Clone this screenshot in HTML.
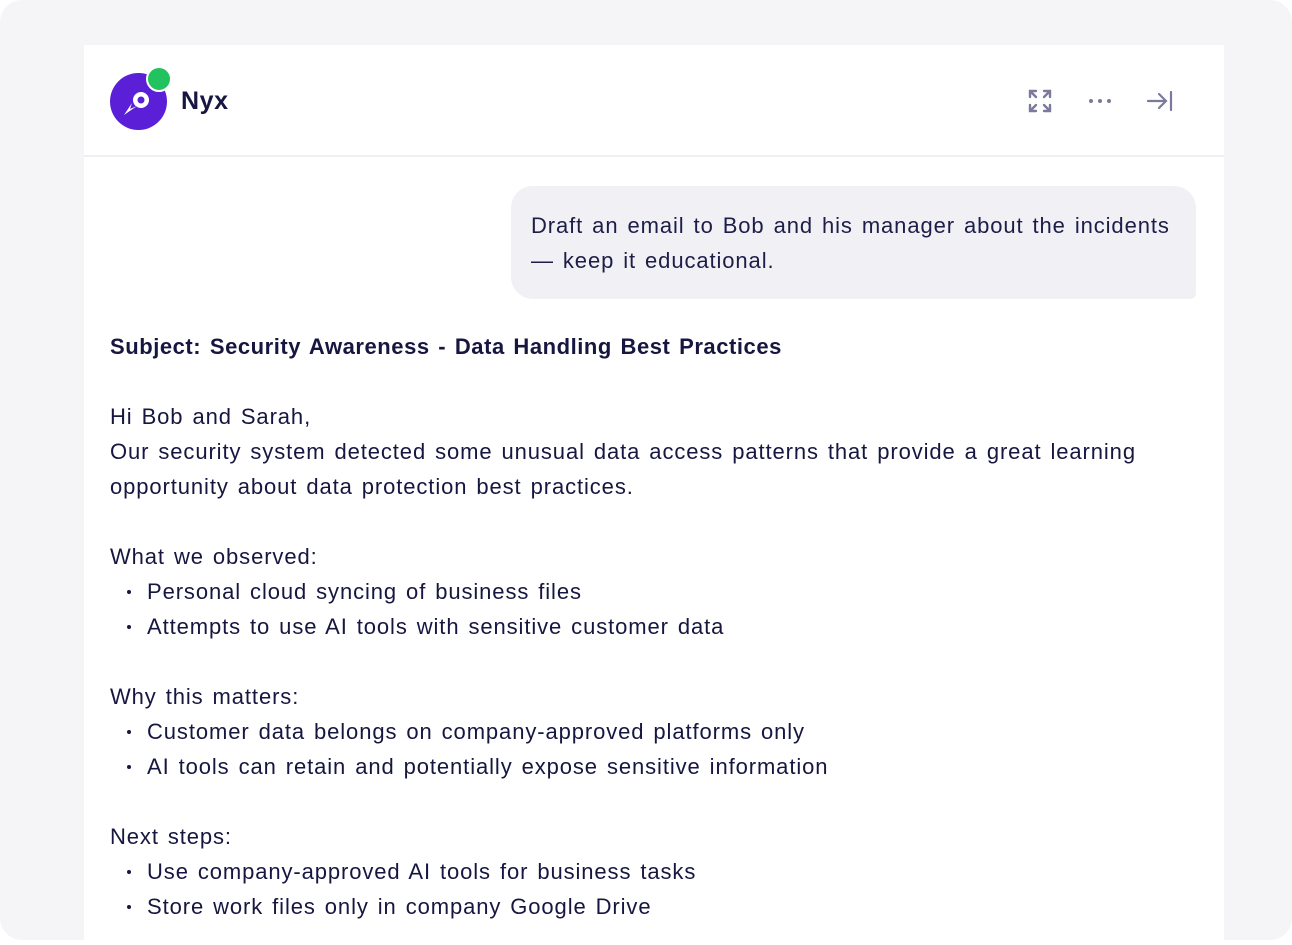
<!DOCTYPE html>
<html><head><meta charset="utf-8"><style>
*{margin:0;padding:0;box-sizing:border-box}
body{width:1292px;height:920px;background:#fff;overflow:hidden;font-family:"Liberation Sans",sans-serif;color:#161640}
.bg{position:absolute;left:0;top:0;width:1292px;height:940px;background:#f5f5f7;border-radius:22px}
.card{position:absolute;left:84px;top:45px;width:1140px;height:900px;background:#fff}
.hdr{height:112px;border-bottom:2px solid #efeff3;position:relative}
.logo{position:absolute;left:26px;top:28px;width:57px;height:57px;border-radius:50%;background:#5a1fd6}
.dot{position:absolute;left:62px;top:21px;width:26px;height:26px;border-radius:50%;background:#22c35e;border:2px solid #fff}
.name{position:absolute;left:97px;top:42px;font-size:25px;letter-spacing:0.6px;font-weight:bold;color:#161640}
.icons svg{position:absolute}
.bubble{position:absolute;left:427px;top:141px;width:685px;height:113px;background:#f0f0f5;border-radius:22px 22px 6px 22px;padding:22px 20px;font-size:22px;letter-spacing:0.9px;word-spacing:2px;line-height:35px;color:#1d1d48}
.body{position:absolute;left:26px;top:284px;font-size:22px;letter-spacing:0.9px;word-spacing:2px;line-height:35px;color:#161640}
.body b{font-weight:bold;letter-spacing:0.55px}
.li{padding-left:37px;position:relative}
.li:before{content:"";position:absolute;left:17px;top:16px;width:4px;height:4px;border-radius:50%;background:#161640}
</style></head><body>
<div class="bg"></div>
<div class="card">
<div class="hdr">
<div class="logo"><svg width="57" height="57" viewBox="0 0 57 57"><path d="M14 42 L22 30 L20 36 L27 33 Z" fill="#fff"/><circle cx="31" cy="27" r="8" fill="#fff"/><circle cx="31" cy="27" r="3.5" fill="#5a1fd6"/></svg></div>
<div class="dot"></div>
<div class="name">Nyx</div>
<div class="icons">
<svg style="left:943px;top:43px" width="26" height="26" viewBox="0 0 26 26" fill="none" stroke="#7c7a9c" stroke-width="2.4" stroke-linecap="round"><path d="M3 9V3h6M3 3l6 6M23 9V3h-6M23 3l-6 6M3 17v6h6M3 23l6-6M23 17v6h-6M23 23l-6-6"/></svg>
<svg style="left:1004px;top:52px" width="24" height="8" viewBox="0 0 24 8" fill="#7c7a9c"><circle cx="3" cy="4" r="2"/><circle cx="12" cy="4" r="2"/><circle cx="21" cy="4" r="2"/></svg>
<svg style="left:1062px;top:44px" width="28" height="24" viewBox="0 0 28 24" fill="none" stroke="#7c7a9c" stroke-width="2.2" stroke-linecap="round"><path d="M2 12h18M13 5l7 7-7 7M25 3v18"/></svg>
</div>
</div>
<div class="bubble">Draft an email to Bob and his manager about the incidents<br>— keep it educational.</div>
<div class="body">
<div><b>Subject: Security Awareness - Data Handling Best Practices</b></div>
<div>&nbsp;</div>
<div>Hi Bob and Sarah,</div>
<div>Our security system detected some unusual data access patterns that provide a great learning</div>
<div>opportunity about data protection best practices.</div>
<div>&nbsp;</div>
<div>What we observed:</div>
<div class="li">Personal cloud syncing of business files</div>
<div class="li">Attempts to use AI tools with sensitive customer data</div>
<div>&nbsp;</div>
<div>Why this matters:</div>
<div class="li">Customer data belongs on company-approved platforms only</div>
<div class="li">AI tools can retain and potentially expose sensitive information</div>
<div>&nbsp;</div>
<div>Next steps:</div>
<div class="li">Use company-approved AI tools for business tasks</div>
<div class="li">Store work files only in company Google Drive</div>
</div>
</div>
</body></html>
